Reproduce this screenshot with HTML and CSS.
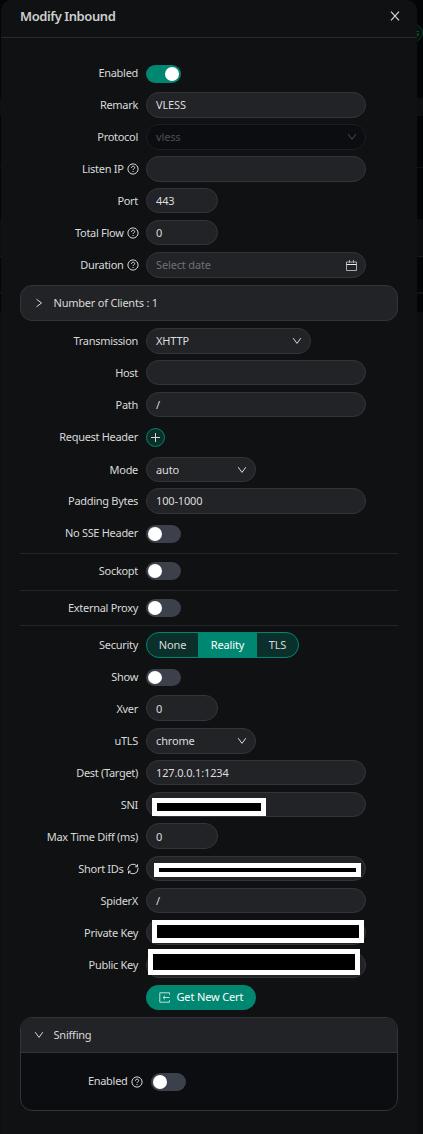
FILE: index.html
```html
<!DOCTYPE html>
<html lang="en">
<head>
<meta charset="utf-8">
<title>Modify Inbound</title>
<link rel="stylesheet" href="styles.css">
</head>
<body>
<svg class="defs" aria-hidden="true">
  <symbol id="help" viewBox="0 0 12 12"><circle cx="6" cy="6" r="5.1"/><path d="M4.4 4.8c0-2.2 3.3-2.1 3.3-.1 0 1.2-1.7 1.2-1.7 2.3M6 8v1"/></symbol>
  <symbol id="down" viewBox="0 0 10 8"><path d="M1.2 1.2 5 6.4 8.8 1.2"/></symbol>
</svg>
<div class="behind"><i class="b1"></i><i class="b2"></i><i class="b3"></i><i class="b4"></i><i class="b5"></i><span class="tag">s</span></div>
<main class="modal">
  <header class="head"><h1>Modify Inbound</h1><svg class="close" viewBox="0 0 10 10"><path d="M1 .7 9 9.3M9 .7 1 9.3"/></svg></header>
  <form class="body">
    <div class="row"><label>Enabled</label><span class="switch on"></span></div>
    <div class="row"><label>Remark</label><div class="field">VLESS</div></div>
    <div class="row"><label>Protocol</label><div class="field disabled">vless<svg class="arrow"><use href="#down"/></svg></div></div>
    <div class="row"><label>Listen IP <svg class="help"><use href="#help"/></svg></label><div class="field"></div></div>
    <div class="row"><label>Port</label><div class="field num low">443</div></div>
    <div class="row"><label>Total Flow <svg class="help"><use href="#help"/></svg></label><div class="field num low">0</div></div>
    <div class="row"><label>Duration <svg class="help"><use href="#help"/></svg></label><div class="field hint">Select date<svg class="cal" viewBox="0 0 11 11"><path d="M.5 2h10v8.5H.5zM3.5 0v3M7.5 0v3"/><path class="bar" d="M.5 4.5h10"/></svg></div></div>
    <section class="panel clients"><div class="panel-head"><svg class="right" viewBox="0 0 8 10"><path d="M1.5 1.2 6.5 5 1.5 8.8"/></svg><span>Number of Clients : 1</span></div></section>
    <div class="row"><label>Transmission</label><div class="field wide">XHTTP<svg class="arrow"><use href="#down"/></svg></div></div>
    <div class="row"><label>Host</label><div class="field low"></div></div>
    <div class="row"><label>Path</label><div class="field low">/</div></div>
    <div class="row"><label>Request Header</label><span class="plus"><svg viewBox="0 0 9 9"><path d="M4.5 0v9M0 4.5h9"/></svg></span></div>
    <div class="row mode"><label>Mode</label><div class="field mid low">auto<svg class="arrow"><use href="#down"/></svg></div></div>
    <div class="row"><label>Padding Bytes</label><div class="field">100-1000</div></div>
    <div class="row"><label>No SSE Header</label><span class="switch"></span></div>
    <hr class="r1">
    <div class="row lift"><label>Sockopt</label><span class="switch"></span></div>
    <hr class="r2">
    <div class="row lift"><label>External Proxy</label><span class="switch"></span></div>
    <hr class="r3">
    <div class="row"><label>Security</label><div class="radios"><span class="none">None</span><span class="sel">Reality</span><span class="tls">TLS</span></div></div>
    <div class="row"><label>Show</label><span class="switch small"></span></div>
    <div class="row up"><label>Xver</label><div class="field num">0</div></div>
    <div class="row"><label>uTLS</label><div class="field mid">chrome<svg class="arrow"><use href="#down"/></svg></div></div>
    <div class="row"><label>Dest (Target)</label><div class="field low">127.0.0.1:1234</div></div>
    <div class="row"><label>SNI</label><div class="field low"><b class="mask m1"></b></div></div>
    <div class="row up"><label>Max Time Diff (ms)</label><div class="field num">0</div></div>
    <div class="row"><label>Short IDs <svg class="help" viewBox="0 0 12 12"><path d="M1 7.2V5.8a5 5 0 0 1 9.2-2.3M11 4.8v1.4a5 5 0 0 1-9.2 2.3M10.5 1.3v2.5H8.2M1.5 10.7V8.2h2.3"/></svg></label><div class="field low"><b class="mask m2"></b></div></div>
    <div class="row"><label>SpiderX</label><div class="field low">/</div></div>
    <div class="row"><label>Private Key</label><div class="field low"><b class="mask m3"></b></div></div>
    <div class="row"><label>Public Key</label><div class="field"><b class="mask m4"></b></div></div>
    <div class="row"><span></span><div class="cert"><svg viewBox="0 0 11 11"><path d="M10.5 2.7V.8H.8v9.4h9.7V8.3M4 5.5h6.5M6 3.7 4 5.5l2 1.8"/></svg>Get New Cert</div></div>
    <section class="panel sniffing"><div class="panel-head"><svg class="downward"><use href="#down"/></svg><span>Sniffing</span></div><div class="panel-body"><label>Enabled <svg class="help"><use href="#help"/></svg></label><span class="switch"></span></div></section>
  </form>
</main>
</body>
</html>
```
FILE: styles.css
```css
* { box-sizing: border-box; }
body { margin: 0; height: 1134px; overflow: hidden; position: relative; background: #040506; color: #d9d9da; font: 450 11px/16px "Noto Sans", "Open Sans", sans-serif; letter-spacing: -.15px; }
svg { fill: none; stroke: currentColor; stroke-width: 1; flex: none; }
.defs { position: absolute; width: 0; height: 0; }
.behind i { position: absolute; left: 0; width: 423px; height: 18px; background: #0e0f11; }
.behind .b1 { top: 98px; }
.behind .b2 { top: 167px; height: 1px; background: #131416; }
.behind .b3 { top: 219px; height: 38px; background: #0d0e10; border-bottom: 1px solid #1a1b1d; }
.behind .b4 { top: 292px; height: 2px; background: #131416; }
.behind .b5 { top: 312px; height: 822px; background: #0d0e10; }
.behind .tag { position: absolute; left: 398px; top: 24px; width: 25px; height: 18px; border: 1px solid #07392f; border-radius: 9px; background: #04110f; color: #287c2b; font-size: 9px; line-height: 15px; text-align: right; padding-right: 3px; }
.modal { position: relative; margin-left: 1px; width: 416px; height: 1134px; background: #101113; border-radius: 10px 10px 0 0; }
.head { height: 38px; border-bottom: 1px solid #292a2c; display: flex; align-items: center; justify-content: space-between; padding: 0 17px 5px 19px; }
h1 { margin: 0; font-size: 13px; line-height: 18px; font-weight: 600; letter-spacing: -.42px; color: #cecece; }
.close { width: 10px; height: 10px; stroke-width: 1.2; }
.body { padding: 19px 19px 0; }
.row { display: grid; grid-template-columns: 118px 1fr; column-gap: 8px; height: 32px; align-items: center; }
label { display: flex; align-items: center; justify-content: flex-end; white-space: nowrap; gap: 3px; letter-spacing: -.3px; }
.row > label { padding-bottom: 1px; margin-left: -10px; }
.help { width: 12px; height: 12px; margin-right: -.5px; position: relative; top: .5px; }
.field { position: relative; width: 220px; height: 26px; border: 1px solid #34353b; border-radius: 13px; background: #222327; padding: 0 8px 0 9px; display: flex; align-items: center; justify-content: space-between; color: #dcdcdd; }
.low { height: 25px; align-self: start; margin-top: 3px; }
.up .field { margin-top: -2px; padding-top: 1px; }
.num { width: 72px; }
.wide { width: 165px; }
.mid { width: 110px; }
.disabled { background: #0c0d11; border-color: #1e1f22; color: #4d4e50; }
.hint { color: #6f7073; }
.arrow { width: 10px; height: 8px; }
.cal { width: 11px; height: 11px; color: #aaaaac; }
.bar { stroke: #eee; }
.switch { width: 35px; height: 18px; border-radius: 9px; background: #3c404b; padding: 2px; display: block; }
.switch::before { content: ""; display: block; width: 14px; height: 14px; border-radius: 50%; background: #fff; }
.row .switch { margin-top: 1px; }
.lift .switch { margin-top: -1px; }
.on { background: #008771; }
.on::before { margin-left: auto; }
.small { height: 17px; }
.small::before { height: 13px; }
.plus { width: 19px; height: 19px; border: 1px solid #008771; border-radius: 50%; background: #0b302b; display: flex; align-items: center; justify-content: center; margin-top: 1px; }
.plus svg { width: 9px; height: 9px; }
.panel { border: 1px solid #333437; border-radius: 12px; background: #222327; overflow: hidden; }
.panel-head { height: 34px; display: flex; align-items: center; padding-left: 13px; letter-spacing: -.22px; }
.panel-head span { margin-left: 9.5px; }
.right { width: 10px; height: 10px; }
.clients { height: 36px; margin: 4px 0; }
.mode { margin-top: 1px; margin-bottom: -1px; }
hr { border: 0; border-top: 1px solid #242527; margin: 0; }
.r1 { margin: 4px 0 1px; }
.r2 { margin: 3px 0 1px; }
.r3 { margin: 1px 0 3px; }
.radios { width: 153px; height: 26px; border: 1px solid #008771; border-radius: 13px; background: #0b302b; overflow: hidden; display: flex; text-align: center; line-height: 24px; }
.none { width: 51px; }
.sel { width: 59px; background: #008771; color: #fff; }
.tls { width: 41px; }
.mask { position: absolute; border: 5px solid #fff; background: #000; z-index: 1; }
.m1 { left: 5px; top: 5px; width: 114px; height: 18px; }
.m2 { left: 7px; top: 6px; width: 207px; height: 14px; }
.m3 { left: 5px; top: -1px; width: 212px; height: 23px; }
.m4 { left: 1px; top: -4px; width: 212px; height: 26px; }
.cert { width: 110px; height: 25px; border-radius: 13px; background: #008771; color: #fff; display: flex; align-items: center; padding-left: 13px; gap: 6.5px; white-space: nowrap; }
.cert svg { width: 11px; height: 11px; opacity: .75; }
.sniffing { height: 94px; margin-top: 4px; background: #0c0d11; }
.sniffing .panel-head { height: 35px; background: #222327; border-bottom: 1px solid #343538; }
.downward { width: 10px; height: 8px; }
.panel-body { height: 57px; display: grid; grid-template-columns: 121px 1fr; column-gap: 9px; align-items: center; }
.panel-body label { padding-bottom: 1px; }
```
